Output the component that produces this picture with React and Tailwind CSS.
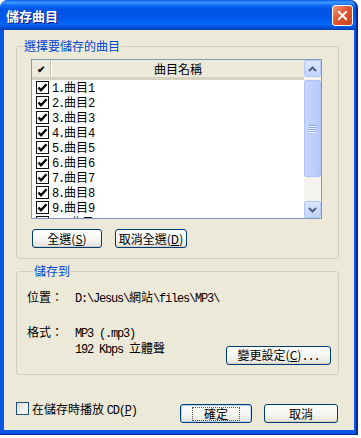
import { X } from 'lucide-react'

const tracks = [1, 2, 3, 4, 5, 6, 7, 8, 9, 10, 11]

// half-width text in a mono face at 6px per char, CJK at 12px
function T({ children }) {
  const parts = String(children).split(/([\x20-\x7e]+)/)
  return parts.map((p, i) =>
    p === '' ? null : /^[\x20-\x7e]+$/.test(p) ? (
      <span key={i} className="font-['Liberation_Mono'] text-[12px] tracking-[-1.2px]">{p}</span>
    ) : (
      <span key={i}>{p}</span>
    )
  )
}

function Check() {
  return (
    <div className="w-[13px] h-[13px] border border-[#111] bg-white flex items-center justify-center shrink-0">
      <svg width="11" height="11" viewBox="0 0 11 11">
        <path d="M1.5 5.5 L4 8.2 L9.5 2.2" fill="none" stroke="#000" strokeWidth="2.4" />
      </svg>
    </div>
  )
}

function Btn({ className = '', focus = false, children }) {
  return (
    <div
      className={`h-[19px] rounded-[3px] border border-[#003C74] bg-[linear-gradient(180deg,#FFFFFF_0%,#F4F4F0_60%,#E3E2DA_100%)] flex items-center justify-center text-[12px] leading-none text-black ${
        focus ? 'shadow-[inset_0_0_0_1px_#B9D1F8]' : 'shadow-[inset_0_-1px_0_#D6D0C5]'
      } ${className}`}
    >
      <span className={focus ? 'px-[12px] py-[1px] outline outline-1 outline-dotted outline-[#555] -outline-offset-1' : ''}>{children}</span>
    </div>
  )
}

export default function App() {
  return (
    <div className="w-[361px] h-[438px] bg-white font-['Noto_Sans_CJK_TC','Noto_Sans',sans-serif]">
      <div className="w-[358px] h-[435px] rounded-t-[8px] bg-[#0A56E6] border-r-2 border-b border-[#0A2496] flex flex-col">
        {/* title bar */}
        <div className="h-[30px] rounded-t-[8px] bg-[linear-gradient(180deg,#0A5FE8_0%,#3D95FF_8%,#0E6CF8_18%,#0054E3_30%,#0057EA_60%,#0666F8_80%,#0050D8_92%,#0040B0_100%)] flex items-center pl-[6px] pr-[3px]">
          <span className="text-white font-bold text-[13px] leading-none [text-shadow:1px_1px_0_#0A1883]">儲存曲目</span>
          <div className="ml-auto w-[21px] h-[21px] rounded-[3px] border border-white bg-[linear-gradient(135deg,#F09A7E_0%,#E2562F_45%,#C7411A_100%)] flex items-center justify-center">
            <X size={15} strokeWidth={3} color="#fff" />
          </div>
        </div>

        {/* client area */}
        <div className="flex-1 ml-[4px] mr-[2px] mb-[4px] bg-[#ECE9D8] flex flex-col text-[12px] text-black">
          <fieldset className="mt-[9px] ml-[12px] w-[323px] border border-[#D0D0BF] rounded-[3px] pt-[6px] pb-[10px]">
            <legend className="ml-[6px] px-[1px] text-[12px] leading-[14px] text-[#0046D5]">選擇要儲存的曲目</legend>

            {/* list view */}
            <div className="ml-[14px] w-[291px] h-[160px] border border-[#7F9DB9] bg-white flex overflow-hidden">
              <div className="flex-1 flex flex-col overflow-hidden">
                <div className="h-[20px] shrink-0 flex bg-[#EBEADB] border-b-[3px] border-[#D6D2C2]">
                  <div className="w-[19px] flex items-center justify-center text-[10px] font-bold border-r border-[#C7C5B2]">✔</div>
                  <div className="flex-1 flex items-center justify-center border-l border-white">曲目名稱</div>
                </div>
                <div className="flex flex-col">
                  {tracks.map((n) => (
                    <div key={n} className="h-[15px] shrink-0 flex items-center pl-[4px] gap-[3px] leading-none">
                      <Check />
                      <span className="whitespace-nowrap"><T>{`${n}.`}</T>曲目<T>{`${n}`}</T></span>
                    </div>
                  ))}
                </div>
              </div>

              {/* scrollbar */}
              <div className="w-[17px] flex flex-col bg-[#F4F3EE]">
                <div className="h-[17px] rounded-[2px] border border-[#B4C8F6] bg-[linear-gradient(180deg,#DCE6FE_0%,#C3D3FD_100%)] flex items-center justify-center">
                  <svg width="9" height="6" viewBox="0 0 9 6">
                    <path d="M1 5 L4.5 1.5 L8 5" fill="none" stroke="#4D6185" strokeWidth="2" />
                  </svg>
                </div>
                <div className="flex-1 pt-[3px] pb-[24px]">
                  <div className="h-[97px] rounded-[2px] border border-[#AEC3F4] bg-[linear-gradient(90deg,#C7D7FD_0%,#BCCFFB_60%,#B5C8F7_100%)] flex flex-col items-center justify-center gap-[1px]">
                    {[0, 1, 2, 3].map((i) => (
                      <div key={i} className="w-[7px] h-[1px] bg-[#8CA6E2] shadow-[0_1px_0_#EEF3FF]" />
                    ))}
                  </div>
                </div>
                <div className="h-[17px] rounded-[2px] border border-[#B4C8F6] bg-[linear-gradient(180deg,#DCE6FE_0%,#C3D3FD_100%)] flex items-center justify-center">
                  <svg width="9" height="6" viewBox="0 0 9 6">
                    <path d="M1 1 L4.5 4.5 L8 1" fill="none" stroke="#4D6185" strokeWidth="2" />
                  </svg>
                </div>
              </div>
            </div>

            <div className="mt-[10px] ml-[15px] flex gap-[13px]">
              <Btn className="w-[70px]">全選(<u>S</u>)</Btn>
              <Btn className="w-[72px]">取消全選(<u>D</u>)</Btn>
            </div>
          </fieldset>

          <fieldset className="mt-[5px] ml-[12px] w-[323px] border border-[#D0D0BF] rounded-[3px] pt-[11px] pb-[9px] pl-[10px] pr-[7px]">
            <legend className="ml-[6px] px-[1px] text-[12px] leading-[14px] text-[#0046D5]">儲存到</legend>
            <div className="flex leading-[15px]">
              <span className="w-[48px]">位置：</span>
              <span className="whitespace-nowrap"><T>{'D:\\Jesus\\'}</T>網站<T>{'\\files\\MP3\\'}</T></span>
            </div>
            <div className="mt-[18px] flex items-start leading-[14px]">
              <span className="w-[48px]">格式：</span>
              <div className="flex flex-col">
                <span className="whitespace-nowrap"><T>MP3 (.mp3)</T></span>
                <span className="whitespace-nowrap"><T>192 Kbps </T>立體聲</span>
              </div>
              <Btn className="ml-auto mt-[21px] w-[105px]">變更設定(<u>C</u>)<T>...</T></Btn>
            </div>
          </fieldset>

          <div className="mt-[27px] ml-[12px] mr-[16px] flex items-start">
            <div className="w-[13px] h-[13px] border border-[#1C5180] bg-[linear-gradient(135deg,#DCDCD7_0%,#F5F5F2_70%,#FFFFFF_100%)]" />
            <span className="ml-[3px] leading-[13px] whitespace-nowrap">在儲存時播放 <T>CD(</T><u><T>P</T></u><T>)</T></span>
            <Btn focus className="ml-auto mt-[2px] w-[72px]">確定</Btn>
            <Btn className="ml-[12px] mt-[2px] w-[74px]">取消</Btn>
          </div>
        </div>
      </div>
    </div>
  )
}
